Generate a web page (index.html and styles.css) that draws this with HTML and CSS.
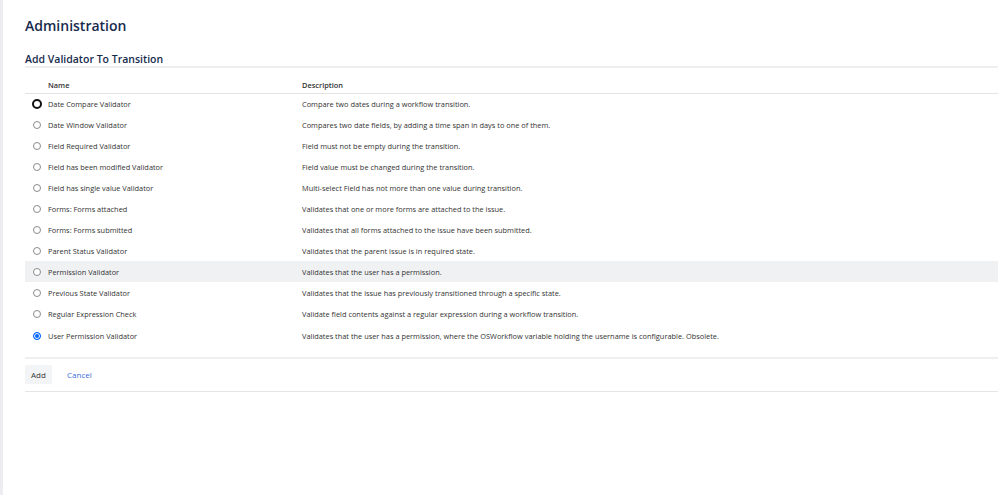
FILE: index.html
```html
<!DOCTYPE html>
<html>
<head>
<meta charset="utf-8">
<link rel="stylesheet" href="styles.css">
</head>
<body>
<div class="page">
  <div class="side"></div>
  <main class="content">
    <h1 class="title">Administration</h1>
    <h2 class="subtitle">Add Validator To Transition</h2>
    <table class="vtable">
      <thead>
        <tr><th class="c-radio"></th><th class="c-name">Name</th><th class="c-desc">Description</th></tr>
      </thead>
      <tbody>
        <tr><td class="c-radio"><span class="radio focus"></span></td><td>Date Compare Validator</td><td>Compare two dates during a workflow transition.</td></tr>
        <tr><td class="c-radio"><span class="radio"></span></td><td>Date Window Validator</td><td>Compares two date fields, by adding a time span in days to one of them.</td></tr>
        <tr><td class="c-radio"><span class="radio"></span></td><td>Field Required Validator</td><td>Field must not be empty during the transition.</td></tr>
        <tr><td class="c-radio"><span class="radio"></span></td><td>Field has been modified Validator</td><td>Field value must be changed during the transition.</td></tr>
        <tr><td class="c-radio"><span class="radio"></span></td><td>Field has single value Validator</td><td>Multi-select Field has not more than one value during transition.</td></tr>
        <tr><td class="c-radio"><span class="radio"></span></td><td>Forms: Forms attached</td><td>Validates that one or more forms are attached to the issue.</td></tr>
        <tr><td class="c-radio"><span class="radio"></span></td><td>Forms: Forms submitted</td><td>Validates that all forms attached to the issue have been submitted.</td></tr>
        <tr><td class="c-radio"><span class="radio"></span></td><td>Parent Status Validator</td><td>Validates that the parent issue is in required state.</td></tr>
        <tr class="hover"><td class="c-radio"><span class="radio"></span></td><td>Permission Validator</td><td>Validates that the user has a permission.</td></tr>
        <tr><td class="c-radio"><span class="radio"></span></td><td>Previous State Validator</td><td>Validates that the issue has previously transitioned through a specific state.</td></tr>
        <tr><td class="c-radio"><span class="radio"></span></td><td>Regular Expression Check</td><td>Validate field contents against a regular expression during a workflow transition.</td></tr>
        <tr class="last"><td class="c-radio"><span class="radio checked"></span></td><td>User Permission Validator</td><td>Validates that the user has a permission, where the OSWorkflow variable holding the username is configurable. Obsolete.</td></tr>
      </tbody>
    </table>
    <div class="actions">
      <button class="btn">Add</button>
      <a class="cancel" href="#">Cancel</a>
    </div>
  </main>
</div>
</body>
</html>
```
FILE: styles.css
```css
html, body {
  margin: 0;
  padding: 0;
  background: #fff;
}
body {
  font-family: "Open Sans", "Noto Sans", sans-serif;
  color: #172b4d;
  width: 998px;
  height: 495px;
  overflow: hidden;
}
.page {
  display: flex;
  height: 495px;
}
.side {
  width: 3px;
  background: #ececf1;
  flex: none;
}
.content {
  flex: 1;
  padding: 0 0 0 22px;
}
.title {
  margin: 0;
  padding-top: 15px;
  font-size: 14px;
  font-weight: 600;
  line-height: 22px;
  color: #172b4d;
}
.subtitle {
  margin: 0;
  padding-top: 15px;
  font-size: 10.5px;
  font-weight: 600;
  line-height: 14px;
  color: #172b4d;
  border-bottom: 2px solid #efefef;
  padding-bottom: 0;
}
.vtable {
  width: 100%;
  border-collapse: collapse;
  font-size: 7.4px;
  color: #333;
  margin-top: 9px;
}
.vtable th {
  text-align: left;
  font-weight: 600;
  height: 16px;
  padding: 0;
  border-bottom: 1px solid #e4e4e4;
  vertical-align: middle;
  color: #333;
  box-sizing: border-box;
}
.vtable td {
  height: 21px;
  padding: 0;
  vertical-align: middle;
  box-sizing: border-box;
}
.c-radio {
  width: 23px;
}
.c-name {
  width: 254px;
}
.radio {
  display: block;
  box-sizing: border-box;
  width: 8px;
  height: 8px;
  border-radius: 50%;
  border: 1px solid #8c8c8c;
  margin-left: 8px;
  background: #fff;
}
.radio.focus {
  width: 10px;
  height: 10px;
  border: 2px solid #111;
  margin-left: 7px;
}
.radio.checked {
  border: 1px solid #0065ff;
  background: #0065ff;
  box-shadow: inset 0 0 0 1px #fff;
}
.hover td {
  background: #f0f1f3;
}
.vtable .last td {
  height: 34px;
  vertical-align: top;
  padding-top: 7px;
  border-bottom: 2px solid #efefef;
}
.vtable .last .radio {
  margin-top: 1px;
}
.actions {
  display: flex;
  align-items: center;
  gap: 15px;
  padding: 6px 0 7px 0;
  border-bottom: 1px solid #e6e6e6;
}
.btn {
  font-family: inherit;
  font-size: 8px;
  color: #333;
  background: #f3f4f6;
  border: none;
  border-radius: 2px;
  width: 27px;
  height: 19px;
  padding: 0;
}
.cancel {
  font-size: 8px;
  color: #3b6fd8;
  text-decoration: none;
}
```
